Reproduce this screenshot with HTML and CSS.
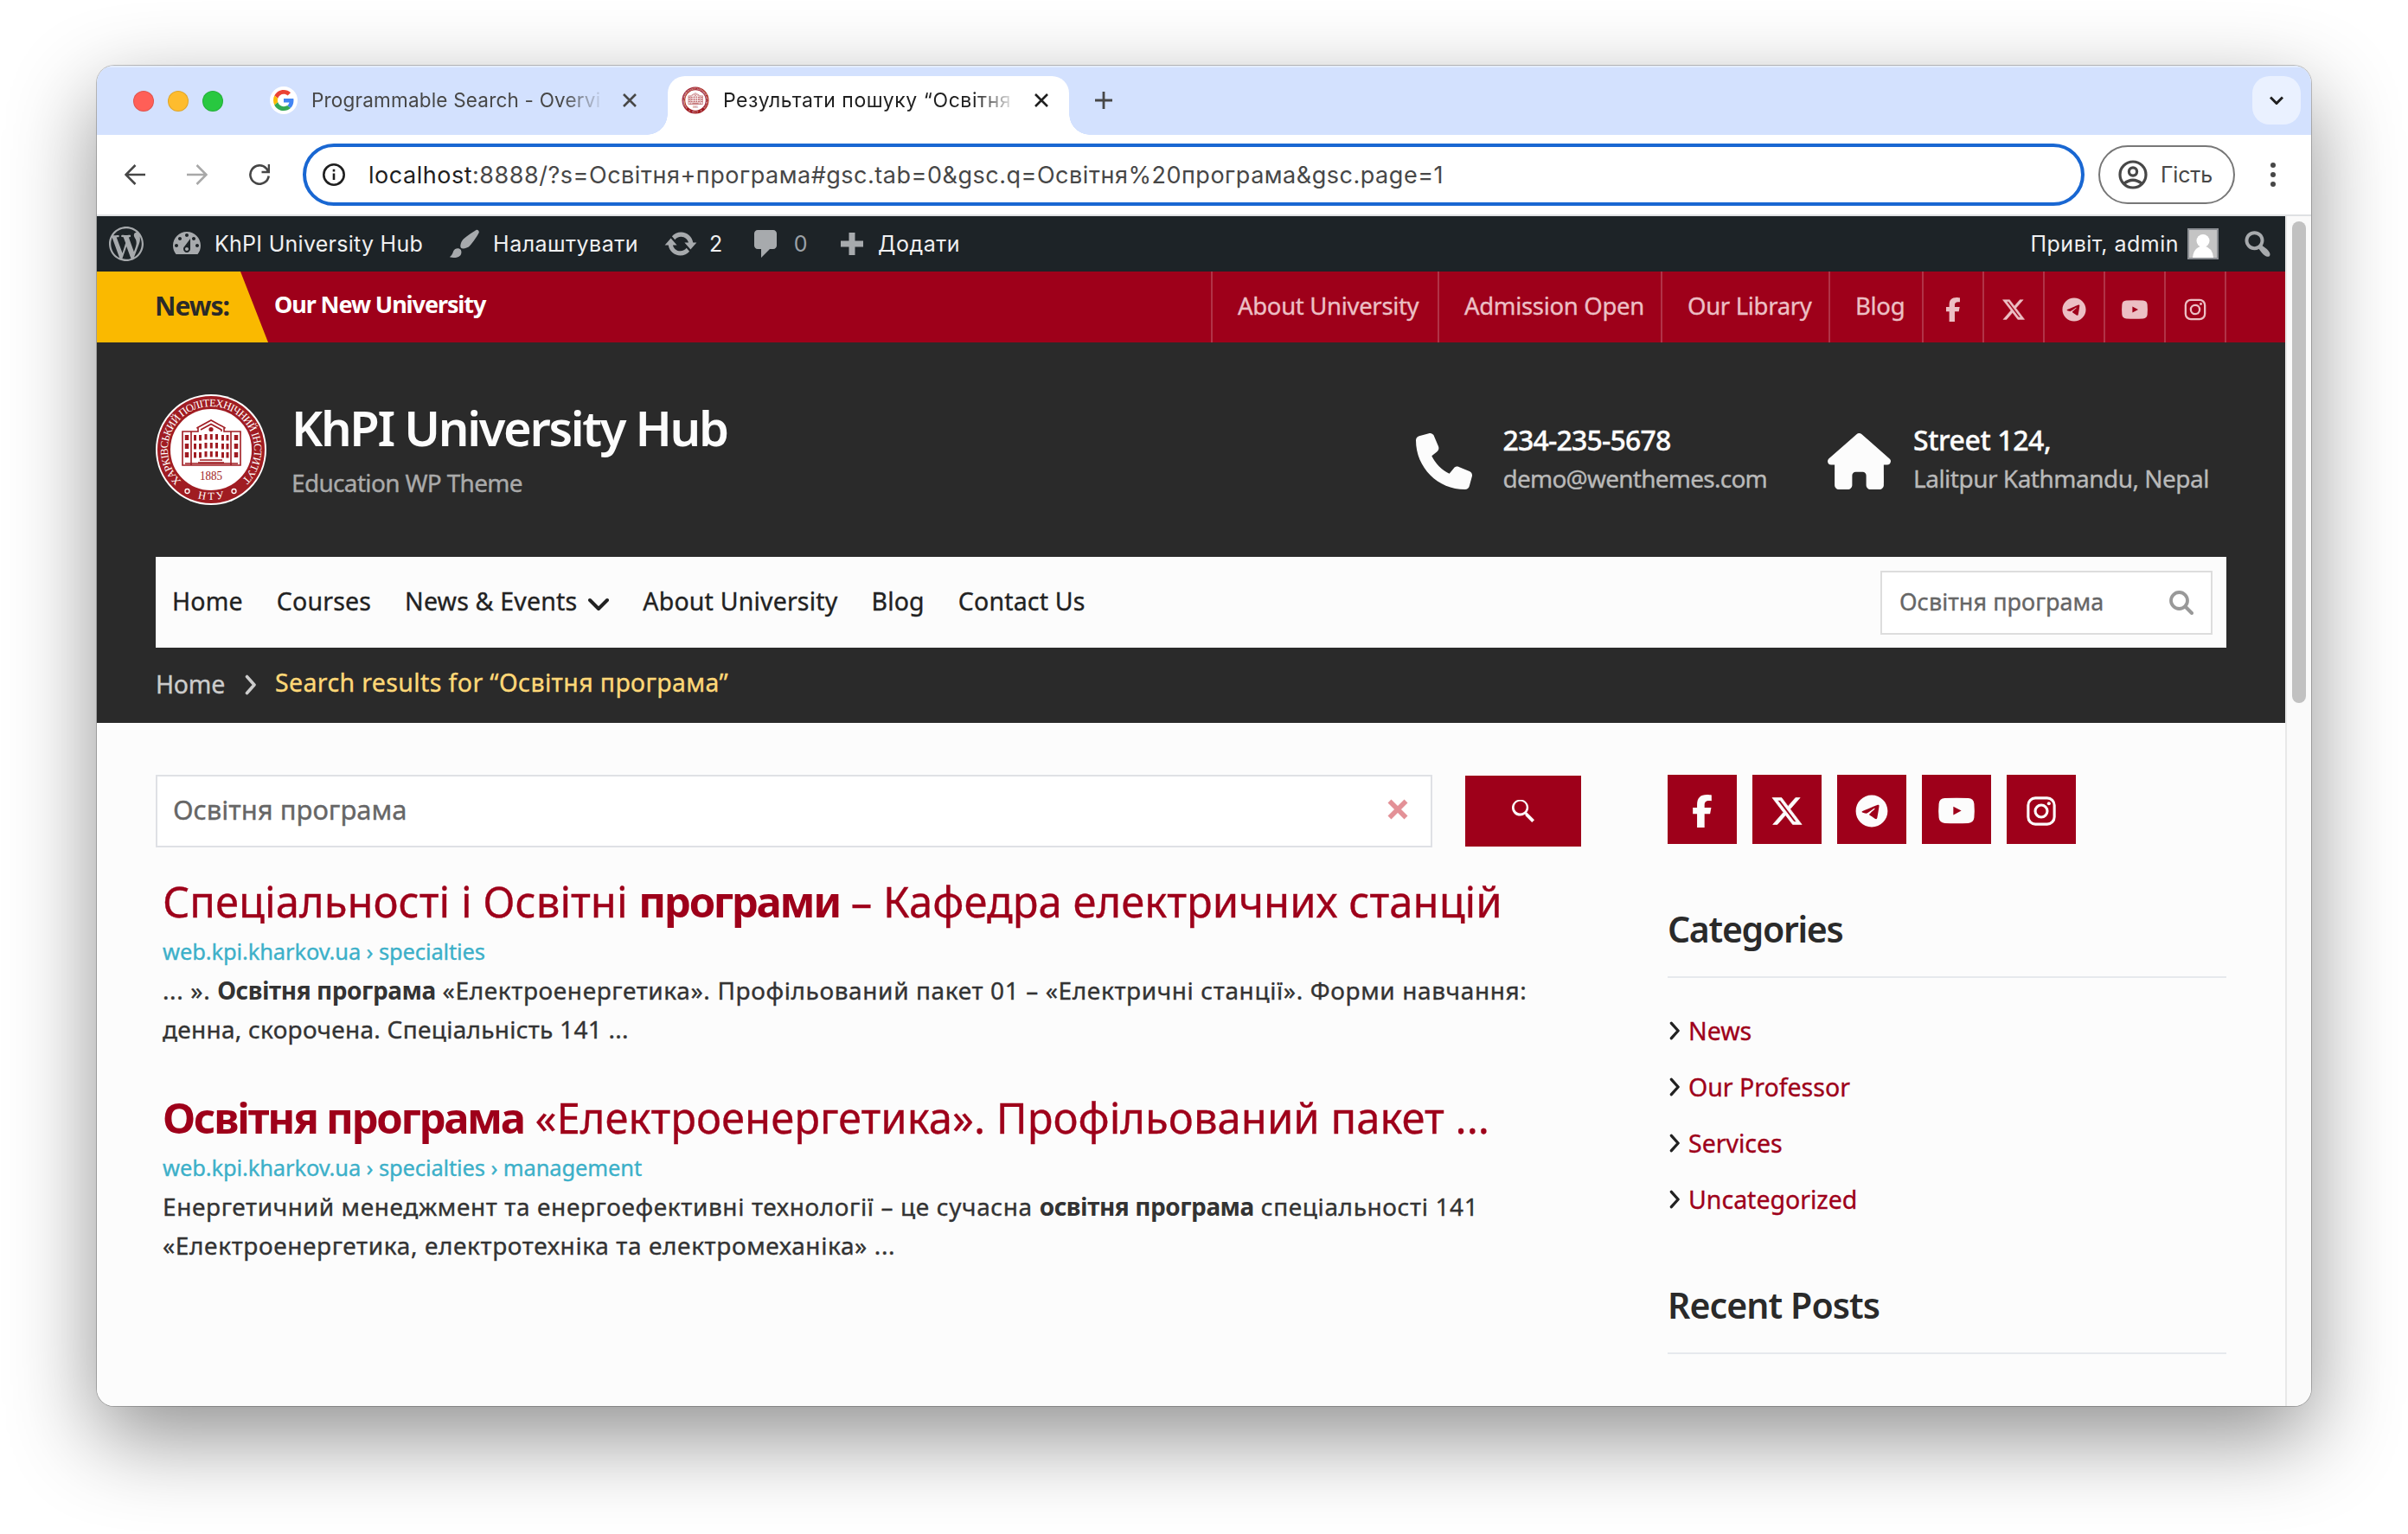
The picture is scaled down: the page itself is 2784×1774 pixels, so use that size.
FILE: index.html
```html
<!DOCTYPE html>
<html lang="uk">
<head>
<meta charset="utf-8">
<title>Результати пошуку “Освітня програма”</title>
<link rel="stylesheet" href="styles.css">
</head>
<body>
<svg class="sprite" aria-hidden="true">
  <symbol id="facebook" viewBox="0 0 320 512"><path d="M80 299.3V512H196V299.3h86.5l18-97.8H196V166.9c0-51.7 20.3-71.5 72.7-71.5c16.3 0 29.4 .4 37 1.2V7.9C291.4 4 256.4 0 236.2 0C129.3 0 80 50.5 80 159.4v42.1H14v97.8H80z"/></symbol>
  <symbol id="x" viewBox="0 0 512 512"><path stroke="currentColor" stroke-width="9" d="M389.2 48h70.6L305.6 224.2 487 464H345L233.7 318.6 106.5 464H35.8L200.7 275.5 26.8 48H172.4L272.9 180.9 389.2 48zM364.4 421.8h39.1L151.1 88h-42L364.4 421.8z"/></symbol>
  <symbol id="telegram" viewBox="0 0 496 512"><path d="M248 8C111 8 0 119 0 256S111 504 248 504 496 393 496 256 385 8 248 8zM363 176.7c-3.7 39.2-19.9 134.4-28.1 178.3-3.5 18.6-10.3 24.8-16.9 25.4-14.4 1.3-25.3-9.5-39.3-18.7-21.8-14.3-34.2-23.2-55.3-37.2-24.5-16.1-8.6-25 5.3-39.5 3.7-3.8 67.1-61.5 68.3-66.7 .2-.7 .3-3.1-1.2-4.4s-3.6-.8-5.1-.5q-3.3 .7-104.6 69.1-14.8 10.2-26.9 9.900c-8.900-.2-25.900-5-38.600-9.100-15.500-5-27.900-7.700-26.800-16.300q.8-6.700 18.500-13.700 108.400-47.200 144.600-62.300c68.900-28.600 83.200-33.600 92.500-33.800 2.100 0 6.600 .5 9.600 2.900a10.500 10.500 0 0 1 3.500 6.700A43.800 43.800 0 0 1 363 176.700z"/></symbol>
  <symbol id="youtube" viewBox="0 0 576 512"><path fill-rule="evenodd" d="M110 66Q288 56 466 66Q548 72 556 150Q566 256 556 362Q548 440 466 446Q288 456 110 446Q28 440 20 362Q10 256 20 150Q28 72 110 66zM240 192V320L362 256z"/></symbol>
  <symbol id="instagram" viewBox="0 0 448 512"><rect x="20" y="52" width="408" height="408" rx="112" fill="none" stroke="currentColor" stroke-width="42"/><circle cx="224" cy="256" r="94" fill="none" stroke="currentColor" stroke-width="42"/><circle cx="343" cy="137" r="27"/></symbol>
  <symbol id="phone" viewBox="0 0 512 512"><path d="M164.9 24.6c-7.7-18.6-28-28.5-47.4-23.2l-88 24C12.1 30.2 0 46 0 64C0 311.4 200.6 512 448 512c18 0 33.8-12.1 38.6-29.5l24-88c5.3-19.4-4.6-39.7-23.2-47.4l-96-40c-16.3-6.8-35.2-2.1-46.3 11.6L304.7 368C234.3 334.7 177.3 277.7 144 207.3L193.3 167c13.7-11.2 18.4-30 11.6-46.3l-40-96z"/></symbol>
  <symbol id="home" viewBox="0 0 576 512"><path d="M575.8 255.5c0 18-15 32.1-32 32.1h-32l.7 160.2c0 2.7-.2 5.4-.5 8.1V472c0 22.1-17.9 40-40 40H456c-1.1 0-2.2 0-3.3-.1c-1.4 .1-2.8 .1-4.2 .1H416 392c-22.1 0-40-17.9-40-40V448 384c0-17.7-14.3-32-32-32H256c-17.7 0-32 14.3-32 32v64 24c0 22.1-17.9 40-40 40H160 128.1c-1.5 0-3-.1-4.5-.2c-1.2 .1-2.4 .2-3.6 .2H104c-22.1 0-40-17.9-40-40V360c0-.9 0-1.9 .1-2.8V287.6H32c-18 0-32-14-32-32.1c0-9 3-17 10-24L266.4 8c7-7 15-8 22-8s15 2 21 7L564.8 231.5c8 7 12 15 11 24z"/></symbol>
  <symbol id="close" viewBox="0 0 16 16"><path d="M1 1L15 15M15 1L1 15" fill="none" stroke="currentColor" stroke-width="2.6"/></symbol>
  <symbol id="chevron-right" viewBox="0 0 14 24"><path d="M2.5 2.5L11 12L2.5 21.5" fill="none" stroke="currentColor" stroke-width="3.6" stroke-linecap="round" stroke-linejoin="round"/></symbol>
  <symbol id="chevron-down" viewBox="0 0 24 16"><path d="M2 3L12 13L22 3" fill="none" stroke="currentColor" stroke-width="4" stroke-linecap="round" stroke-linejoin="round"/></symbol>
</svg>

<div class="window">
  <div class="tabs">
    <div class="lights"><i class="red"></i><i class="yellow"></i><i class="green"></i></div>
    <div class="tab">
      <span class="favicon google"><svg viewBox="0 0 48 48"><path fill="#ea4335" d="M24 9.500c3.540 0 6.710 1.220 9.210 3.600l6.850-6.850C35.900 2.380 30.470 0 24 0 14.620 0 6.510 5.380 2.560 13.220l7.980 6.190C12.430 13.720 17.740 9.500 24 9.500z"/><path fill="#4285f4" d="M46.980 24.550c0-1.570-.15-3.090-.38-4.550H24v9.020h12.940c-.58 2.960-2.260 5.480-4.780 7.180l7.730 6c4.510-4.180 7.090-10.360 7.090-17.650z"/><path fill="#fbbc05" d="M10.530 28.590c-.48-1.450-.76-2.990-.76-4.590s.27-3.140.76-4.590l-7.980-6.190C.92 16.460 0 20.120 0 24c0 3.880.92 7.540 2.560 10.780l7.970-6.190z"/><path fill="#34a853" d="M24 48c6.480 0 11.930-2.130 15.890-5.810l-7.730-6c-2.150 1.450-4.920 2.300-8.160 2.300-6.260 0-11.570-4.220-13.470-9.910l-7.980 6.190C6.510 42.620 14.620 48 24 48z"/></svg></span>
      <span class="tab-title">Programmable Search - Overview</span>
      <svg class="tab-close"><use href="#close"/></svg>
    </div>
    <div class="tab active">
      <svg class="favicon" viewBox="0 0 128 128"><use href="#seal"/></svg>
      <span class="tab-title">Результати пошуку “Освітня програма”</span>
      <svg class="tab-close"><use href="#close"/></svg>
    </div>
    <svg class="new-tab" viewBox="0 0 20 20"><path d="M10 0V20M0 10H20" stroke="#474747" stroke-width="2.800"/></svg>
    <div class="tab-search"><svg viewBox="0 0 16 10"><path d="M1 1.500L8 8.500L15 1.500" fill="none" stroke="#1f1f1f" stroke-width="3"/></svg></div>
  </div>

  <div class="toolbar">
    <svg class="nav-icon" viewBox="0 0 24 24"><path d="M24 12H2M12.500 1L1.500 12L12.500 23" fill="none" stroke="#474747" stroke-width="2.600"/></svg>
    <svg class="nav-icon" viewBox="0 0 24 24"><path d="M0 12H22M11.500 1L22.500 12L11.500 23" fill="none" stroke="#a8a8a8" stroke-width="2.600"/></svg>
    <svg class="nav-icon" viewBox="0 0 24 24"><path d="M22.700 13.500A10.700 10.700 0 1 1 20 4.800L22 8M23 0V9H14.500" fill="none" stroke="#474747" stroke-width="2.600"/></svg>
    <div class="omnibox">
      <svg viewBox="0 0 26 26"><circle cx="13" cy="13" r="11.700" fill="none" stroke="#1f1f1f" stroke-width="2.600"/><path d="M13 11.500V19M13 6.800V9.400" stroke="#1f1f1f" stroke-width="2.600"/></svg>
      <span class="url"><b>localhost</b>:8888/?s=Освітня+програма#gsc.tab=0&amp;gsc.q=Освітня%20програма&amp;gsc.page=1</span>
    </div>
    <div class="profile">
      <svg viewBox="0 0 34 34"><g fill="none" stroke="#474747" stroke-width="3.200"><circle cx="17" cy="17" r="15"/><circle cx="17" cy="13.500" r="4.600"/><path d="M6.500 27.500Q17 19 27.500 27.500"/></g></svg>
      <span>Гість</span>
    </div>
    <div class="dots"><i></i><i></i><i></i></div>
  </div>

  <div class="viewport">
    <div class="page">
      <div class="adminbar">
        <svg class="wp" viewBox="0 0 20 20"><path d="M20 10c0-5.510-4.490-10-10-10C4.480 0 0 4.490 0 10c0 5.520 4.480 10 10 10 5.510 0 10-4.480 10-10zM7.780 15.370L4.370 6.220c.55-.02 1.170-.08 1.170-.08.5-.06.44-1.130-.06-1.110 0 0-1.450.11-2.370.11-.18 0-.37 0-.58-.01C4.120 2.690 6.870 1.110 10 1.110c2.330 0 4.450.87 6.050 2.340-.68-.11-1.650.39-1.650 1.580 0 .74.45 1.360.9 2.100.35.61.55 1.360.55 2.460 0 1.490-1.400 5-1.400 5l-3.030-8.370c.54-.02.82-.17.82-.17.5-.05.44-1.250-.06-1.220 0 0-1.440.12-2.380.12-.87 0-2.330-.12-2.330-.12-.5-.03-.56 1.200-.06 1.220l.92.08 1.260 3.410zM17.410 10c.24-.64.74-1.870.43-4.250.7 1.290 1.050 2.710 1.050 4.250 0 3.290-1.730 6.240-4.400 7.780.97-2.590 1.940-5.200 2.920-7.780zM6.100 18.090C3.120 16.650 1.110 13.530 1.110 10c0-1.300.23-2.480.72-3.590C3.250 10.300 4.670 14.200 6.100 18.090zm4.030-6.630l2.580 6.980c-.86.29-1.760.45-2.710.45-.79 0-1.570-.11-2.290-.33.81-2.380 1.620-4.740 2.420-7.100z"/></svg>
        <span class="item site"><svg viewBox="0 0 20 20"><path fill-rule="evenodd" d="M3.760 16h12.480c1.100-1.370 1.760-3.110 1.760-5 0-4.420-3.580-8-8-8s-8 3.580-8 8c0 1.890.66 3.630 1.760 5zM10 4c.55 0 1 .45 1 1s-.45 1-1 1-1-.45-1-1 .45-1 1-1zM6 6c.55 0 1 .45 1 1s-.45 1-1 1-1-.45-1-1 .45-1 1-1zm8 0c.55 0 1 .45 1 1s-.45 1-1 1-1-.45-1-1 .45-1 1-1zm-5.370 5.550L12 7v6c0 1.100-.9 2-2 2s-2-.9-2-2c0-.57.24-1.080.63-1.450zM4 10c.55 0 1 .45 1 1s-.45 1-1 1-1-.45-1-1 .45-1 1-1zm12 0c.55 0 1 .45 1 1s-.45 1-1 1-1-.45-1-1 .45-1 1-1zm-5 3c0-.55-.45-1-1-1s-1 .45-1 1 .45 1 1 1 1-.45 1-1z"/></svg><span>KhPI University Hub</span></span>
        <span class="item customize"><svg viewBox="0 0 20 20"><path d="M18.330 3.570s.27-.8-.31-1.360c-.53-.52-1.220-.24-1.220-.24-.61.3-5.760 3.470-7.670 5.570-.86.96-2.060 3.790-1.090 4.820.92.98 3.960-.17 4.790-1 2.060-2.060 5.210-7.170 5.500-7.790zM1.400 17.650c2.370-1.560 1.460-3.410 3.230-4.640.93-.65 2.220-.62 3.080.29.63.67.8 2.570-.16 3.460-1.570 1.450-4 1.550-6.150.89z"/></svg><span>Налаштувати</span></span>
        <span class="item updates"><svg viewBox="0 0 20 20"><path d="M10.200 3.280c3.530 0 6.430 2.610 6.920 6h2.080l-3.500 4-3.500-4h2.320c-.45-1.970-2.210-3.450-4.320-3.450-1.450 0-2.730.71-3.540 1.780L4.950 5.660C6.230 4.200 8.110 3.280 10.200 3.280zm-.4 13.440c-3.520 0-6.430-2.610-6.920-6H.8l3.500-4c1.170 1.330 2.330 2.670 3.500 4H5.480c.45 1.970 2.210 3.450 4.320 3.450 1.450 0 2.730-.71 3.540-1.780l1.710 1.950c-1.280 1.460-3.150 2.380-5.250 2.380z"/></svg><span>2</span></span>
        <span class="item comments"><svg viewBox="0 0 20 20"><path d="M5 2h9c1.100 0 2 .9 2 2v7c0 1.100-.9 2-2 2h-2l-5 5v-5H5c-1.100 0-2-.9-2-2V4c0-1.100.9-2 2-2z"/></svg><span>0</span></span>
        <span class="item add"><svg viewBox="0 0 26 26"><path d="M9.500 0h7v9.500H26v7h-9.500V26h-7v-9.500H0v-7h9.500z"/></svg><span>Додати</span></span>
        <span class="item account"><span>Привіт, admin</span><svg class="avatar" viewBox="0 0 36 36"><rect x="1" y="1" width="34" height="34" fill="#c4c4c4" stroke="#8c8f94" stroke-width="2"/><circle cx="18" cy="14.500" r="7.500" fill="#fff"/><path d="M6 34Q7 22 18 20Q29 22 30 34z" fill="#fff"/></svg></span>
        <svg class="admin-search" viewBox="0 0 20 20"><path d="M12.140 4.180c1.870 1.870 2.110 4.750.72 6.890.12.1.22.21.36.31.2.16.47.36.81.59.34.24.56.39.66.47.42.31.73.57.94.78.32.32.6.65.84 1 .25.35.44.69.59 1.040.14.35.21.68.18 1-.02.32-.14.59-.36.81s-.49.34-.81.36c-.31.02-.65-.04-.99-.19-.35-.14-.7-.34-1.040-.59-.35-.24-.68-.52-1-.84-.21-.21-.47-.52-.77-.93-.1-.13-.25-.35-.47-.66-.22-.32-.4-.57-.56-.78-.16-.2-.29-.35-.44-.5-2.070 1.090-4.690.76-6.440-.98-2.140-2.150-2.140-5.640 0-7.780 2.150-2.150 5.630-2.150 7.780 0zm-1.410 6.360c1.360-1.370 1.360-3.580 0-4.950-1.370-1.370-3.590-1.370-4.950 0-1.370 1.370-1.370 3.580 0 4.950 1.360 1.370 3.580 1.370 4.950 0z"/></svg>
      </div>

      <div class="topbar">
        <div class="news-label">News:</div>
        <div class="ticker">Our New University</div>
        <div class="quick-links">
          <a class="q-about">About University</a>
          <a class="q-admission">Admission Open</a>
          <a class="q-library">Our Library</a>
          <a class="q-blog">Blog</a>
          <a class="soc"><svg><use href="#facebook"/></svg></a>
          <a class="soc"><svg><use href="#x"/></svg></a>
          <a class="soc"><svg><use href="#telegram"/></svg></a>
          <a class="soc"><svg class="yt"><use href="#youtube"/></svg></a>
          <a class="soc"><svg><use href="#instagram"/></svg></a>
        </div>
      </div>

      <header class="header">
        <div class="branding">
          <svg class="logo" viewBox="0 0 128 128">
            <g id="seal">
              <circle cx="64" cy="64" r="64" fill="#fff"/>
              <circle cx="64" cy="64" r="54.5" fill="none" stroke="#a01c22" stroke-width="15"/>
              <path fill="none" stroke="#a01c22" stroke-width="1.600" d="M31 43H49V39H47.500L64 30L80.500 39H79V43H98V82H31zM52 41L64 34.500L76 41V43M41 43V82M87 43V82M34 80H95M51 76H77M49 79H79"/>
              <circle cx="64" cy="40.500" r="2.600" fill="#a01c22"/>
              <path d="M36 47V74M93 47V74" stroke="#a01c22" stroke-width="4.500" stroke-dasharray="6 4" fill="none"/>
              <path d="M45.500 47V74M51.500 47V74M58 46V74M64.300 46V74M70.500 46V74M77.500 47V74M83 47V74" stroke="#a01c22" stroke-width="3" stroke-dasharray="6.500 3.500" fill="none"/>
              <text x="64" y="99" text-anchor="middle" class="seal-year" textLength="26" lengthAdjust="spacingAndGlyphs">1885</text>
              <path id="seal-top" d="M29.500 100.200A50 50 0 1 1 98.500 100.200" fill="none"/>
              <path id="seal-bottom" d="M44 118.500A58.500 58.500 0 0 0 84 118.500" fill="none"/>
              <text class="seal-ring"><textPath href="#seal-top" textLength="236">ХАРКІВСЬКИЙ ПОЛІТЕХНІЧНИЙ ІНСТИТУТ</textPath></text>
              <text class="seal-ring" text-anchor="middle"><textPath href="#seal-bottom" startOffset="50%" textLength="31">НТУ</textPath></text>
              <g fill="none" stroke="#fff" stroke-width="1.300"><circle cx="36.500" cy="112" r="2.500"/><circle cx="90.500" cy="112" r="2.500"/></g>
            </g>
          </svg>
          <div class="identity">
            <h1>KhPI University Hub</h1>
            <p>Education WP Theme</p>
          </div>
          <div class="contact phone">
            <svg><use href="#phone"/></svg>
            <div><strong>234-235-5678</strong><br><span>demo@wenthemes.com</span></div>
          </div>
          <div class="contact address">
            <svg><use href="#home"/></svg>
            <div><strong>Street 124,</strong><br><span>Lalitpur Kathmandu, Nepal</span></div>
          </div>
        </div>
        <nav class="nav">
          <a>Home</a>
          <a>Courses</a>
          <a class="has-menu">News &amp; Events<svg><use href="#chevron-down"/></svg></a>
          <a>About University</a>
          <a>Blog</a>
          <a>Contact Us</a>
          <div class="nav-search"><span>Освітня програма</span><svg viewBox="0 0 28 28"><circle cx="11.500" cy="11.500" r="9.500" fill="none" stroke="#999" stroke-width="3.800"/><path d="M18.500 18.500L26 26" stroke="#999" stroke-width="4" stroke-linecap="round"/></svg></div>
        </nav>
        <div class="crumbs"><a>Home</a><svg><use href="#chevron-right"/></svg><span>Search results for “Освітня програма”</span></div>
      </header>

      <div class="content">
        <main class="results">
          <div class="search-form">
            <div class="search-input"><span>Освітня програма</span><svg viewBox="0 0 24 24"><path d="M2.500 2.500L21.500 21.500M21.500 2.500L2.500 21.500" stroke="#e39197" stroke-width="5.600"/></svg></div>
            <div class="search-button"><svg viewBox="0 0 13 13"><path fill="#fff" d="M4.840 7.770c.64 0 1.230-.16 1.770-.47.54-.31.96-.73 1.270-1.270.31-.54.47-1.130.47-1.770 0-.64-.16-1.230-.47-1.770-.31-.54-.73-.96-1.270-1.270C6.070.9 5.480.75 4.840.75c-.64 0-1.230.16-1.770.47-.54.31-.96.73-1.270 1.270-.31.54-.47 1.130-.47 1.770 0 .64.16 1.230.47 1.770.31.54.73.96 1.270 1.270.54.31 1.130.47 1.770.47zm4.300 0L13 11.600 11.600 13 7.770 9.140v-.62l-.21-.21c-.78.66-1.700 1-2.720 1-1.350 0-2.490-.45-3.430-1.360C.47 7.010 0 5.880 0 4.560c0-1.320.47-2.450 1.410-3.360C2.350.3 3.490-.1 4.840-.1 6.180-.1 7.300.3 8.210 1.200c.91.9 1.370 2.040 1.370 3.360 0 1.020-.34 1.920-1 2.720l.21.200z"/></svg></div>
          </div>
          <article class="result">
            <h2>Спеціальності і Освітні <b>програми</b> – Кафедра електричних станцій</h2>
            <div class="path">web.kpi.kharkov.ua › specialties</div>
            <p>... ». <b>Освітня програма</b> «Електроенергетика». Профільований пакет 01 – «Електричні станції». Форми навчання:<br><span class="tight">денна, скорочена. Спеціальність 141 ...</span></p>
          </article>
          <article class="result">
            <h2><b>Освітня програма</b> «Електроенергетика». Профільований пакет ...</h2>
            <div class="path">web.kpi.kharkov.ua › specialties › management</div>
            <p>Енергетичний менеджмент та енергоефективні технології – це сучасна <b>освітня програма</b> спеціальності 141<br>«Електроенергетика, електротехніка та електромеханіка» ...</p>
          </article>
        </main>
        <aside class="sidebar">
          <div class="social">
            <a><svg><use href="#facebook"/></svg></a>
            <a><svg><use href="#x"/></svg></a>
            <a><svg><use href="#telegram"/></svg></a>
            <a><svg class="yt"><use href="#youtube"/></svg></a>
            <a><svg><use href="#instagram"/></svg></a>
          </div>
          <h3>Categories</h3>
          <ul>
            <li><svg><use href="#chevron-right"/></svg><a>News</a></li>
            <li><svg><use href="#chevron-right"/></svg><a>Our Professor</a></li>
            <li><svg><use href="#chevron-right"/></svg><a>Services</a></li>
            <li><svg><use href="#chevron-right"/></svg><a>Uncategorized</a></li>
          </ul>
          <h3>Recent Posts</h3>
        </aside>
      </div>
    </div>
    <div class="scrollbar"><i></i></div>
  </div>
</div>
</body>
</html>
```

FILE: styles.css
```css
* { box-sizing: border-box; }
body { margin: 0; width: 2784px; height: 1774px; overflow: hidden; background: #fff; font-family: "Noto Sans", sans-serif; }
h1, h2, h3, p, ul { margin: 0; padding: 0; list-style: none; }
svg { display: block; flex: none; fill: currentColor; }
span, a, p, h1, h2, h3, div { white-space: nowrap; }
.sprite { position: absolute; width: 0; height: 0; }

.window { width: 2560px; height: 1550px; margin: 76px 112px; border-radius: 20px; overflow: hidden; display: flex; flex-direction: column; background: #fff; box-shadow: 0 0 0 1px rgba(0,0,0,.22), 0 36px 100px rgba(0,0,0,.44); }

/* Tab strip */
.tabs { height: 80px; flex: none; background: #d3e1fe; display: flex; align-items: flex-start; padding: 12px 12px 0 42px; box-shadow: inset 0 2px #e4edff; font: 22.5px/56px Inter, sans-serif; letter-spacing: .2px; color: #474747; }
.lights { display: flex; gap: 16px; margin-top: 17px; }
.lights i { width: 24px; height: 24px; border-radius: 50%; border: 1px solid rgba(0,0,0,.12); }
.red { background: #ff5f57; }
.yellow { background: #febc2e; }
.green { background: #28c840; }
.tab { display: flex; align-items: center; height: 56px; margin-left: 54px; width: 424px; }
.tab.active { position: relative; height: 68px; width: 464px; margin-left: 36px; padding: 0 0 12px 16px; background: #fff; color: #1f1f1f; border-radius: 20px 20px 0 0; font-size: 23px; letter-spacing: .55px; }
.tab.active::before, .tab.active::after { content: ""; position: absolute; bottom: 0; width: 24px; height: 24px; }
.tab.active::before { left: -24px; background: radial-gradient(circle at 0 0, transparent 23.5px, #fff 24px); }
.tab.active::after { right: -24px; background: radial-gradient(circle at 100% 0, transparent 23.5px, #fff 24px); }
.favicon { width: 32px; height: 32px; flex: none; }
.google { border-radius: 50%; background: #fff; display: grid; place-items: center; }
.google svg { width: 24px; height: 24px; }
.tab-title { width: 334px; margin-left: 16px; margin-right: 1px; overflow: hidden; -webkit-mask-image: linear-gradient(90deg, #000 290px, transparent 340px); mask-image: linear-gradient(90deg, #000 290px, transparent 340px); }
.tab-close { width: 16px; height: 16px; margin-left: 25px; }
.new-tab { width: 20px; height: 20px; margin: 18px 0 0 30px; }
.tab-search { margin-left: auto; width: 56px; height: 56px; border-radius: 20px; background: #eaf1ff; display: grid; place-items: center; }
.tab-search svg { width: 16px; height: 10px; }

/* Toolbar */
.toolbar { height: 94px; flex: none; background: #fff; border-bottom: 2px solid #dfe1e3; display: flex; align-items: center; padding: 0 38px 0 32px; gap: 48px; font-family: Inter, sans-serif; color: #474747; }
.nav-icon { width: 24px; height: 24px; }
.omnibox { width: 2060px; height: 72px; margin-left: -10px; border: 4px solid #1967d2; border-radius: 36px; display: flex; align-items: center; padding-left: 19px; font-size: 27px; letter-spacing: .52px; }
.omnibox svg { width: 26px; height: 26px; margin-right: 27px; }
.url b { font-weight: 400; color: #1f1f1f; }
.profile { width: 158px; height: 68px; margin-left: -32px; border: 2px solid #777; border-radius: 34px; display: flex; align-items: center; padding-left: 21px; font-size: 25px; letter-spacing: -.15px; gap: 15px; }
.profile svg { width: 34px; height: 34px; }
.dots { display: grid; gap: 5px; margin-left: -7px; }
.dots i { width: 6px; height: 6px; border-radius: 50%; background: #474747; }

.viewport { flex: 1; display: flex; min-height: 0; }
.page { width: 2530px; background: #fcfcfc; -webkit-text-stroke: .35px currentColor; }
.scrollbar { width: 30px; background: #fafafa; border-left: 2px solid #e8e8e8; padding: 6px 0 0 6px; }
.scrollbar i { display: block; width: 16px; height: 557px; border-radius: 8px; background: #c1c1c1; }

/* Admin bar */
.adminbar { height: 64px; background: #1d2327; display: flex; align-items: center; padding: 0 12px 0 14px; font: 25px Inter, sans-serif; letter-spacing: .48px; color: #f0f0f1; -webkit-text-stroke: 0; }
.adminbar svg { width: 40px; height: 40px; color: #a7aaad; }
.item { display: flex; align-items: center; }
.site { margin-left: 30px; letter-spacing: .27px; }
.site svg { margin-right: 12px; }
.customize { margin-left: 28px; }
.customize svg { margin-right: 13px; }
.updates { margin-left: 29px; }
.updates svg { margin-right: 13px; }
.comments { margin-left: 30px; color: #9ca1a7; }
.comments svg { margin-right: 12px; }
.add { margin-left: 38px; }
.adminbar .add svg { width: 26px; height: 26px; margin-right: 17px; }
.account { margin-left: auto; }
.adminbar .avatar { width: 36px; height: 36px; margin: 0 25px 0 10px; }

/* Red top bar */
.topbar { height: 82px; background: #9e001a; display: flex; color: #fff; }
.news-label { width: 198px; padding-left: 67px; background: #fab900; clip-path: polygon(0 0, 166px 0, 198px 100%, 0 100%); font: 700 30px/79px "Noto Sans", sans-serif; letter-spacing: -.97px; color: #2a2a2a; }
.ticker { padding-left: 7px; font: 700 27px/75px "Noto Sans", sans-serif; letter-spacing: -1.1px; }
.quick-links { margin-left: auto; margin-right: 68px; display: flex; border-right: 2px solid rgba(255,255,255,.2); font-size: 27.5px; line-height: 79px; letter-spacing: -.32px; color: #ecbfc4; }
.quick-links a { border-left: 2px solid rgba(255,255,255,.2); padding-left: 29px; }
.q-about { width: 262px; }
.q-admission { width: 258px; }
.q-library { width: 194px; }
.q-blog { width: 108px; }
.quick-links .soc { width: 70px; padding: 5px 0 0; display: grid; place-items: center; }
.soc svg { width: 28px; height: 28px; }
.soc .yt { width: 32px; }

/* Header */
.header { height: 440px; padding: 0 68px; background: #2a2a2a; color: #fcfcfc; }
.branding { height: 248px; padding-top: 60px; display: flex; }
.logo { width: 128px; height: 128px; }
.logo, .favicon { -webkit-text-stroke: 0; }
.seal-year { font: 14px "Liberation Serif", serif; fill: #a01c22; }
.seal-ring { font: 12.5px "Liberation Serif", serif; fill: #fff; }
.identity { margin-left: 29px; }
.identity h1 { font-size: 56px; line-height: 76px; font-weight: 600; letter-spacing: -2.3px; -webkit-text-stroke: 0; }
.identity p { font-size: 28px; line-height: 53px; letter-spacing: -.67px; color: #aaa; }
.contact { display: flex; font-size: 28px; line-height: 43px; color: #b9b9b9; padding-top: 31px; }
.contact strong { font-size: 32px; font-weight: 500; color: #fcfcfc; letter-spacing: -.8px; }
.contact svg { height: 65px; margin-top: 14px; color: #fcfcfc; }
.phone { margin-left: auto; letter-spacing: -.75px; }
.phone svg { width: 65px; margin-right: 35px; }
.address { margin-left: 70px; margin-right: 20px; letter-spacing: -.5px; }
.address strong { letter-spacing: -.4px; }
.address svg { width: 73px; margin-right: 26px; }
.nav { height: 105px; background: #fcfcfc; color: #222; display: flex; padding: 16px 16px 0 19px; gap: 39px; font-size: 28.5px; line-height: 70px; letter-spacing: .18px; }
.nav a { display: flex; }
.has-menu svg { width: 24px; height: 16px; margin: 31px 0 0 13px; }
.nav-search { margin-left: auto; width: 384px; height: 74px; border: 2px solid #ddd; background: #fff; display: flex; padding: 0 20px; font-size: 27px; line-height: 67px; letter-spacing: .05px; color: #666; justify-content: space-between; }
.nav-search svg { width: 28px; height: 28px; margin-top: 21px; }
.crumbs { display: flex; align-items: center; font-size: 28.5px; line-height: 80px; height: 80px; letter-spacing: .38px; color: #ffd877; }
.crumbs a { color: #ccc; padding-top: 4px; letter-spacing: -.27px; }
.crumbs svg { width: 14px; height: 24px; margin: 5px 21px 0 23px; color: #ccc; }

/* Content */
.content { display: flex; padding: 60px 68px 0; }
.results { width: 1748px; }
.search-form { display: flex; gap: 38px; }
.search-input { width: 1476px; height: 84px; border: 2px solid #dfe1e5; background: #fff; display: flex; justify-content: space-between; padding: 0 26px 0 18px; font-size: 31px; line-height: 76px; color: #666; }
.search-input svg { width: 24px; height: 24px; margin-top: 26px; }
.search-button { width: 134px; height: 82px; margin-top: 1px; background: #9e001a; display: grid; place-items: center; }
.search-button svg { width: 26px; height: 26px; }
.result { padding-left: 8px; margin-top: 26px; }
.result + .result { margin-top: 43px; }
.result h2 { font-size: 49px; line-height: 72px; font-weight: 400; color: #9e001a; }
.result h2 b { letter-spacing: -2.3px; }
.path { font-size: 25.5px; line-height: 44px; letter-spacing: -.12px; color: #3cb0c9; }
.result p { padding-top: 1px; font-size: 28px; line-height: 45px; letter-spacing: .62px; color: #333; }
.result p b { letter-spacing: -.45px; }
.result p .tight { letter-spacing: .27px; }
.result b, .sidebar h3, .news-label, .ticker { -webkit-text-stroke: 0; }
.sidebar { width: 646px; }
.social { display: flex; gap: 18px; }
.social a { width: 80px; height: 80px; background: #9e001a; color: #fcfcfc; display: grid; place-items: center; padding-top: 3px; }
.social svg { width: 38px; height: 38px; }
.social .yt { width: 44px; height: 39px; }
.sidebar h3 { height: 98px; margin-top: 57px; border-bottom: 2px solid #e6e9ed; font-size: 41px; line-height: 83px; font-weight: 600; letter-spacing: -1.3px; color: #2a2a2a; }
.sidebar ul { padding-top: 28px; }
.sidebar ul + h3 { margin-top: 49px; letter-spacing: -.9px; }
.sidebar li { display: flex; align-items: center; height: 65px; font-size: 28.5px; color: #9e001a; }
.sidebar li svg { width: 13px; height: 22px; margin-right: 9px; margin-left: 2px; color: #222; }
```
